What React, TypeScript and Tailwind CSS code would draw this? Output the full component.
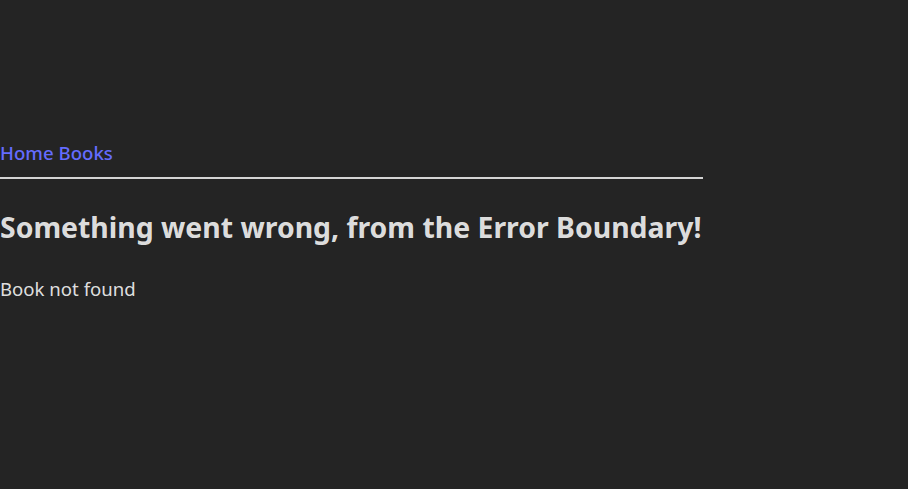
export default function App() {
  return (
    <div
      className="min-h-screen bg-[#242424] pt-[138px] text-[rgba(255,255,255,0.87)]"
      style={{ fontFamily: '"Noto Sans", "Open Sans", sans-serif' }}
    >
      <div className="w-[703px]">
        <nav className="flex gap-[5px] text-[18.6px] font-medium leading-[30px] text-[#646cff]">
          <a href="#">Home</a>
          <a href="#">Books</a>
        </nav>
        <div className="mt-[9px] h-[2px] bg-[#d4d4d4]" />
        <h2 className="mt-[26px] whitespace-nowrap text-[28.4px] font-bold leading-[45px]">
          Something went wrong, from the Error Boundary!
        </h2>
        <p className="mt-[24px] text-[18.6px] leading-[30px]">Book not found</p>
      </div>
    </div>
  );
}
